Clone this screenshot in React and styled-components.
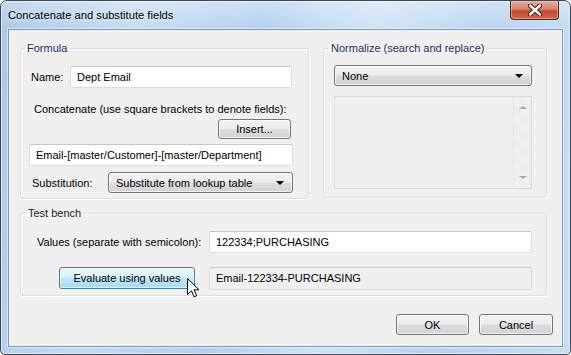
import React from 'react'
import styled, { createGlobalStyle, css } from 'styled-components'

const GlobalStyle = createGlobalStyle`
  body {
    margin: 0;
    background: #fff;
    font-family: "Liberation Sans", Arial, sans-serif;
    font-size: 11px;
    color: #000;
  }
  * {
    box-sizing: border-box;
  }
`

const Window = styled.div`
  width: 571px;
  height: 355px;
  border: 1px solid #3a4656;
  border-radius: 7px 7px 5px 5px;
  background:
    linear-gradient(to bottom, rgba(255, 255, 255, 0.35), rgba(255, 255, 255, 0) 30px),
    linear-gradient(100deg, #a9c7e8 0%, #c4dbf3 22%, #b3cfee 42%, #cfe3f6 60%, #b9d3ef 78%, #c8def4 100%);
  padding: 0 7px 7px;
  display: flex;
  flex-direction: column;
  box-shadow: inset 0 0 0 1px rgba(255, 255, 255, 0.55);
`

const TitleBar = styled.div`
  height: 28px;
  display: flex;
  align-items: flex-start;
  justify-content: space-between;
`

const Title = styled.div`
  padding-top: 8px;
  font-size: 11.2px;
  color: #000;
  text-shadow: 0 0 6px rgba(255, 255, 255, 0.9);
`

const CloseButton = styled.div`
  width: 49px;
  height: 19px;
  margin-right: 4px;
  border: 1px solid #5c2118;
  border-top: none;
  border-radius: 0 0 4px 4px;
  background: linear-gradient(to bottom, #e9ac9c 0%, #d9826f 45%, #c44a31 55%, #cf6a4f 100%);
  box-shadow: inset 0 0 0 1px rgba(255, 210, 200, 0.45);
  display: flex;
  align-items: center;
  justify-content: center;
`

const Client = styled.div`
  flex: 1;
  position: relative;
  background: #f0f0f0;
  border: 1px solid #8197b3;
  box-shadow: 0 0 0 1px rgba(255, 255, 255, 0.45);
  padding: 11px 9px 0 11px;
  display: flex;
  flex-direction: column;
`

const TopRow = styled.div`
  display: flex;
  gap: 14px;
`

const Group = styled.fieldset`
  margin: ${(p) => p.mt || 0}px 0 0;
  min-width: 0;
  width: ${(p) => p.width}px;
  height: ${(p) => p.height}px;
  border: 1px solid #d5dfe5;
  border-radius: 3px;
  box-shadow: inset 1px 1px 0 #fff, 1px 1px 0 #fff;
  padding: 0;
`

const GroupBody = styled.div`
  padding: ${(p) => p.pad || '0'};
  display: flex;
  flex-direction: column;
`

const Legend = styled.legend`
  margin-left: ${(p) => p.offset || 4}px;
  padding: 0 2px;
  font-size: 11px;
  line-height: 15px;
  color: ${(p) => p.color || '#1c2e6e'};
`

const Row = styled.div`
  display: flex;
  align-items: center;
  margin-top: ${(p) => p.mt || 0}px;
  margin-left: ${(p) => p.ml || 0}px;
  margin-right: ${(p) => p.mr || 0}px;
  justify-content: ${(p) => p.justify || 'flex-start'};
`

const Label = styled.span`
  width: ${(p) => (p.width ? p.width + 'px' : 'auto')};
  flex-shrink: 0;
  white-space: nowrap;
`

const Field = styled.div`
  flex: 1;
  height: ${(p) => p.h || 22}px;
  background: ${(p) => (p.readOnly ? '#f0f0f0' : '#fff')};
  border: 1px solid #dadee4;
  border-top-color: #c4c8cd;
  border-radius: 2px;
  padding: 0 6px;
  display: flex;
  align-items: center;
  white-space: nowrap;
  overflow: hidden;
`

const buttonFace = css`
  border: 1px solid #777;
  border-radius: 3px;
  background: linear-gradient(to bottom, #f3f3f3 0%, #ececec 48%, #dedede 52%, #d2d2d2 100%);
  box-shadow: inset 0 0 0 1px rgba(255, 255, 255, 0.7);
`

const Button = styled.div`
  ${buttonFace}
  position: relative;
  width: ${(p) => p.width}px;
  height: ${(p) => p.height || 21}px;
  display: flex;
  align-items: center;
  justify-content: center;
  ${(p) =>
    p.hover &&
    css`
      border-color: #3c7fb1;
      background: linear-gradient(to bottom, #eaf6fd 0%, #d9f0fc 48%, #bee6fd 52%, #a7d9f5 100%);
    `}
`

const Combo = styled.div`
  ${buttonFace}
  flex: 1;
  height: 21px;
  padding: 0 8px 0 7px;
  display: flex;
  align-items: center;
  justify-content: space-between;
`

const Arrow = styled.span`
  width: 0;
  height: 0;
  border-left: 4px solid transparent;
  border-right: 4px solid transparent;
  border-top: 4px solid #000;
`

const ListBox = styled.div`
  height: 93px;
  margin-top: 10px;
  border: 1px solid #d9d9d9;
  background: #f0f0f0;
  display: flex;
  justify-content: flex-end;
`

const ScrollBar = styled.div`
  width: 18px;
  border-left: 1px solid #e6e6e6;
  background: repeating-linear-gradient(45deg, #f2f2f2 0 1px, #ebebeb 1px 2px);
  display: flex;
  flex-direction: column;
  justify-content: space-between;
  align-items: center;
  padding: 9px 0 9px;
`

const ScrollArrow = styled.span`
  width: 0;
  height: 0;
  border-left: 4px solid transparent;
  border-right: 4px solid transparent;
  ${(p) => (p.up ? 'border-bottom' : 'border-top')}: 3px solid #a7a7a7;
`

const BenchGrid = styled.div`
  display: grid;
  grid-template-columns: 172px 323px;
  grid-template-rows: 22px 22px;
  row-gap: 14px;
  align-items: center;
  margin: 10px 0 0 16px;
`

const EvalCell = styled.div`
  padding-left: 22px;
`

const Cursor = styled.svg`
  position: absolute;
  left: 127px;
  top: 10px;
`

const Footer = styled.div`
  display: flex;
  justify-content: flex-end;
  gap: 10px;
  margin-top: 18px;
`

export default function App() {
  return (
    <>
      <GlobalStyle />
      <Window>
        <TitleBar>
          <Title>Concatenate and substitute fields</Title>
          <CloseButton>
            <svg width="14" height="12" viewBox="0 0 14 12">
              <path
                d="M2 1.5 L12 10.5 M12 1.5 L2 10.5"
                stroke="#3d1a14"
                strokeWidth="4.4"
                strokeLinecap="round"
              />
              <path
                d="M2 1.5 L12 10.5 M12 1.5 L2 10.5"
                stroke="#fff"
                strokeWidth="2.4"
                strokeLinecap="round"
              />
            </svg>
          </CloseButton>
        </TitleBar>

        <Client>
          <TopRow>
            <Group width={289} height={158}>
              <Legend offset={4}>Formula</Legend>
              <GroupBody pad="0 16px 0 10px">
                <Row mt={10}>
                  <Label width={39}>Name:</Label>
                  <Field>Dept Email</Field>
                </Row>
                <Row mt={15} ml={3}>
                  <Label>Concatenate (use square brackets to denote fields):</Label>
                </Row>
                <Row mt={4} justify="flex-end" mr={1}>
                  <Button width={73} height={20}>Insert...</Button>
                </Row>
                <Row mt={5} ml={-2} mr={-1}>
                  <Field>Email-[master/Customer]-[master/Department]</Field>
                </Row>
                <Row mt={6} mr={-1} ml={1}>
                  <Label width={76}>Substitution:</Label>
                  <Combo>
                    <span>Substitute from lookup table</span>
                    <Arrow />
                  </Combo>
                </Row>
              </GroupBody>
            </Group>

            <Group width={224} height={157}>
              <Legend offset={5}>Normalize (search and replace)</Legend>
              <GroupBody pad="0 14px 0 10px">
                <Row mt={9}>
                  <Combo>
                    <span>None</span>
                    <Arrow />
                  </Combo>
                </Row>
                <ListBox>
                  <ScrollBar>
                    <ScrollArrow up />
                    <ScrollArrow />
                  </ScrollBar>
                </ListBox>
              </GroupBody>
            </Group>
          </TopRow>

          <Group width={527} height={90} mt={7}>
            <Legend offset={5} color="#222">Test bench</Legend>
            <BenchGrid>
              <Label>Values (separate with semicolon):</Label>
              <Field>122334;PURCHASING</Field>
              <EvalCell>
                <Button width={136} height={22} hover>
                  Evaluate using values
                  <Cursor width="13" height="20" viewBox="0 0 13 20">
                    <path
                      d="M0.5 0.5 L0.5 16.5 L4.5 12.8 L7 18.8 L9.6 17.7 L7.1 11.8 L12 11.8 Z"
                      fill="#fff"
                      stroke="#000"
                      strokeWidth="1"
                      strokeLinejoin="round"
                    />
                  </Cursor>
                </Button>
              </EvalCell>
              <Field readOnly h={23}>Email-122334-PURCHASING</Field>
            </BenchGrid>
          </Group>

          <Footer>
            <Button width={73} height={21}>OK</Button>
            <Button width={74} height={21}>Cancel</Button>
          </Footer>
        </Client>
      </Window>
    </>
  )
}
